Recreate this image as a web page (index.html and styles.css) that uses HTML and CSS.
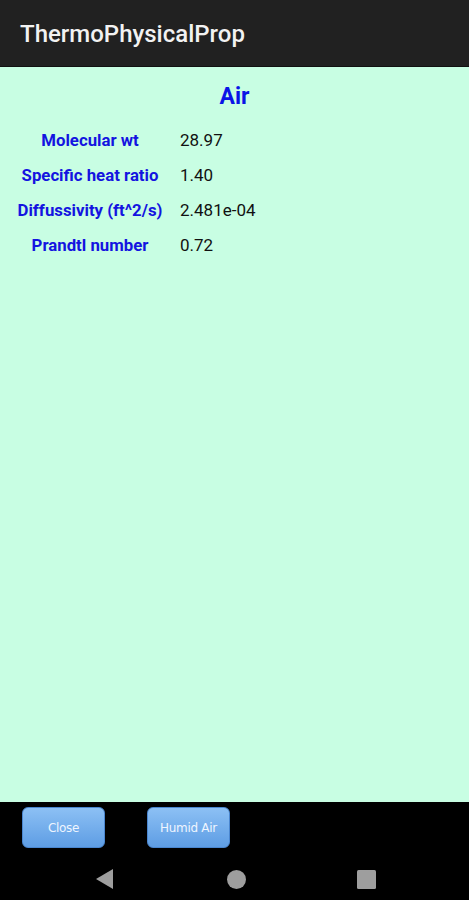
FILE: index.html
```html
<!DOCTYPE html>
<html>
<head>
<meta charset="utf-8">
<link rel="stylesheet" href="styles.css">
</head>
<body>
<div class="screen">
  <header class="appbar"><span class="title">ThermoPhysicalProp</span></header>
  <main class="content">
    <h1 class="heading">Air</h1>
    <div class="props">
      <div class="label">Molecular wt</div><div class="value">28.97</div>
      <div class="label">Specific heat ratio</div><div class="value">1.40</div>
      <div class="label">Diffussivity (ft^2/s)</div><div class="value">2.481e-04</div>
      <div class="label">Prandtl number</div><div class="value">0.72</div>
    </div>
  </main>
  <footer class="bottom">
    <div class="buttons">
      <button class="btn">Close</button>
      <button class="btn">Humid Air</button>
    </div>
    <nav class="navbar">
      <svg class="nav-icon" width="18" height="20" viewBox="0 0 18 20"><polygon points="17,0 17,20 0,10" fill="#9e9e9e"/></svg>
      <svg class="nav-icon" width="19" height="19" viewBox="0 0 19 19"><circle cx="9.5" cy="9.5" r="9.5" fill="#9e9e9e"/></svg>
      <svg class="nav-icon" width="19" height="19" viewBox="0 0 19 19"><rect x="0" y="0" width="19" height="19" rx="1.5" fill="#9e9e9e"/></svg>
    </nav>
  </footer>
</div>
</body>
</html>
```
FILE: styles.css
```css
* { box-sizing: border-box; }
html, body { margin: 0; padding: 0; }
body { width: 469px; height: 900px; overflow: hidden; background: #000; font-family: Roboto, "Noto Sans", sans-serif; }
.screen { display: flex; flex-direction: column; height: 900px; }
.appbar {
  height: 67px;
  background: #212121;
  display: flex;
  align-items: center;
  padding-left: 20px;
  border-bottom: 1px solid #111;
}
.title { color: #f2f2f2; font-size: 24px; font-weight: 500; padding-top: 2px; }
.content {
  flex: 1;
  background: #c8fee3;
  padding-top: 14px;
}
.heading {
  margin: 0;
  text-align: center;
  color: #0a14e6;
  font-size: 23px;
  font-weight: 700;
  line-height: 32px;
}
.props {
  display: grid;
  grid-template-columns: 180px 1fr;
  grid-auto-rows: 35px;
  margin-top: 9px;
  align-items: center;
}
.label { color: #1414e0; font-weight: 700; font-size: 16.8px; text-align: center; }
.value { color: #111; font-size: 17px; }
.bottom { height: 98px; background: #000; display: flex; flex-direction: column; }
.buttons { display: flex; gap: 42px; padding: 5px 0 0 22px; height: 60px; }
.btn {
  width: 83px;
  height: 41px;
  border: 1px solid #4a86cf;
  border-radius: 6px;
  background: linear-gradient(#8cc0f4, #5e9de4);
  color: #eef5ff;
  font-family: "DejaVu Sans", sans-serif;
  font-size: 12px;
  letter-spacing: -0.3px;
  padding: 0;
}
.navbar { display: flex; align-items: center; height: 38px; padding-bottom: 4px; }
.nav-icon:nth-child(1) { margin-left: 96px; }
.nav-icon:nth-child(2) { margin-left: 113px; }
.nav-icon:nth-child(3) { margin-left: 111px; }
```
